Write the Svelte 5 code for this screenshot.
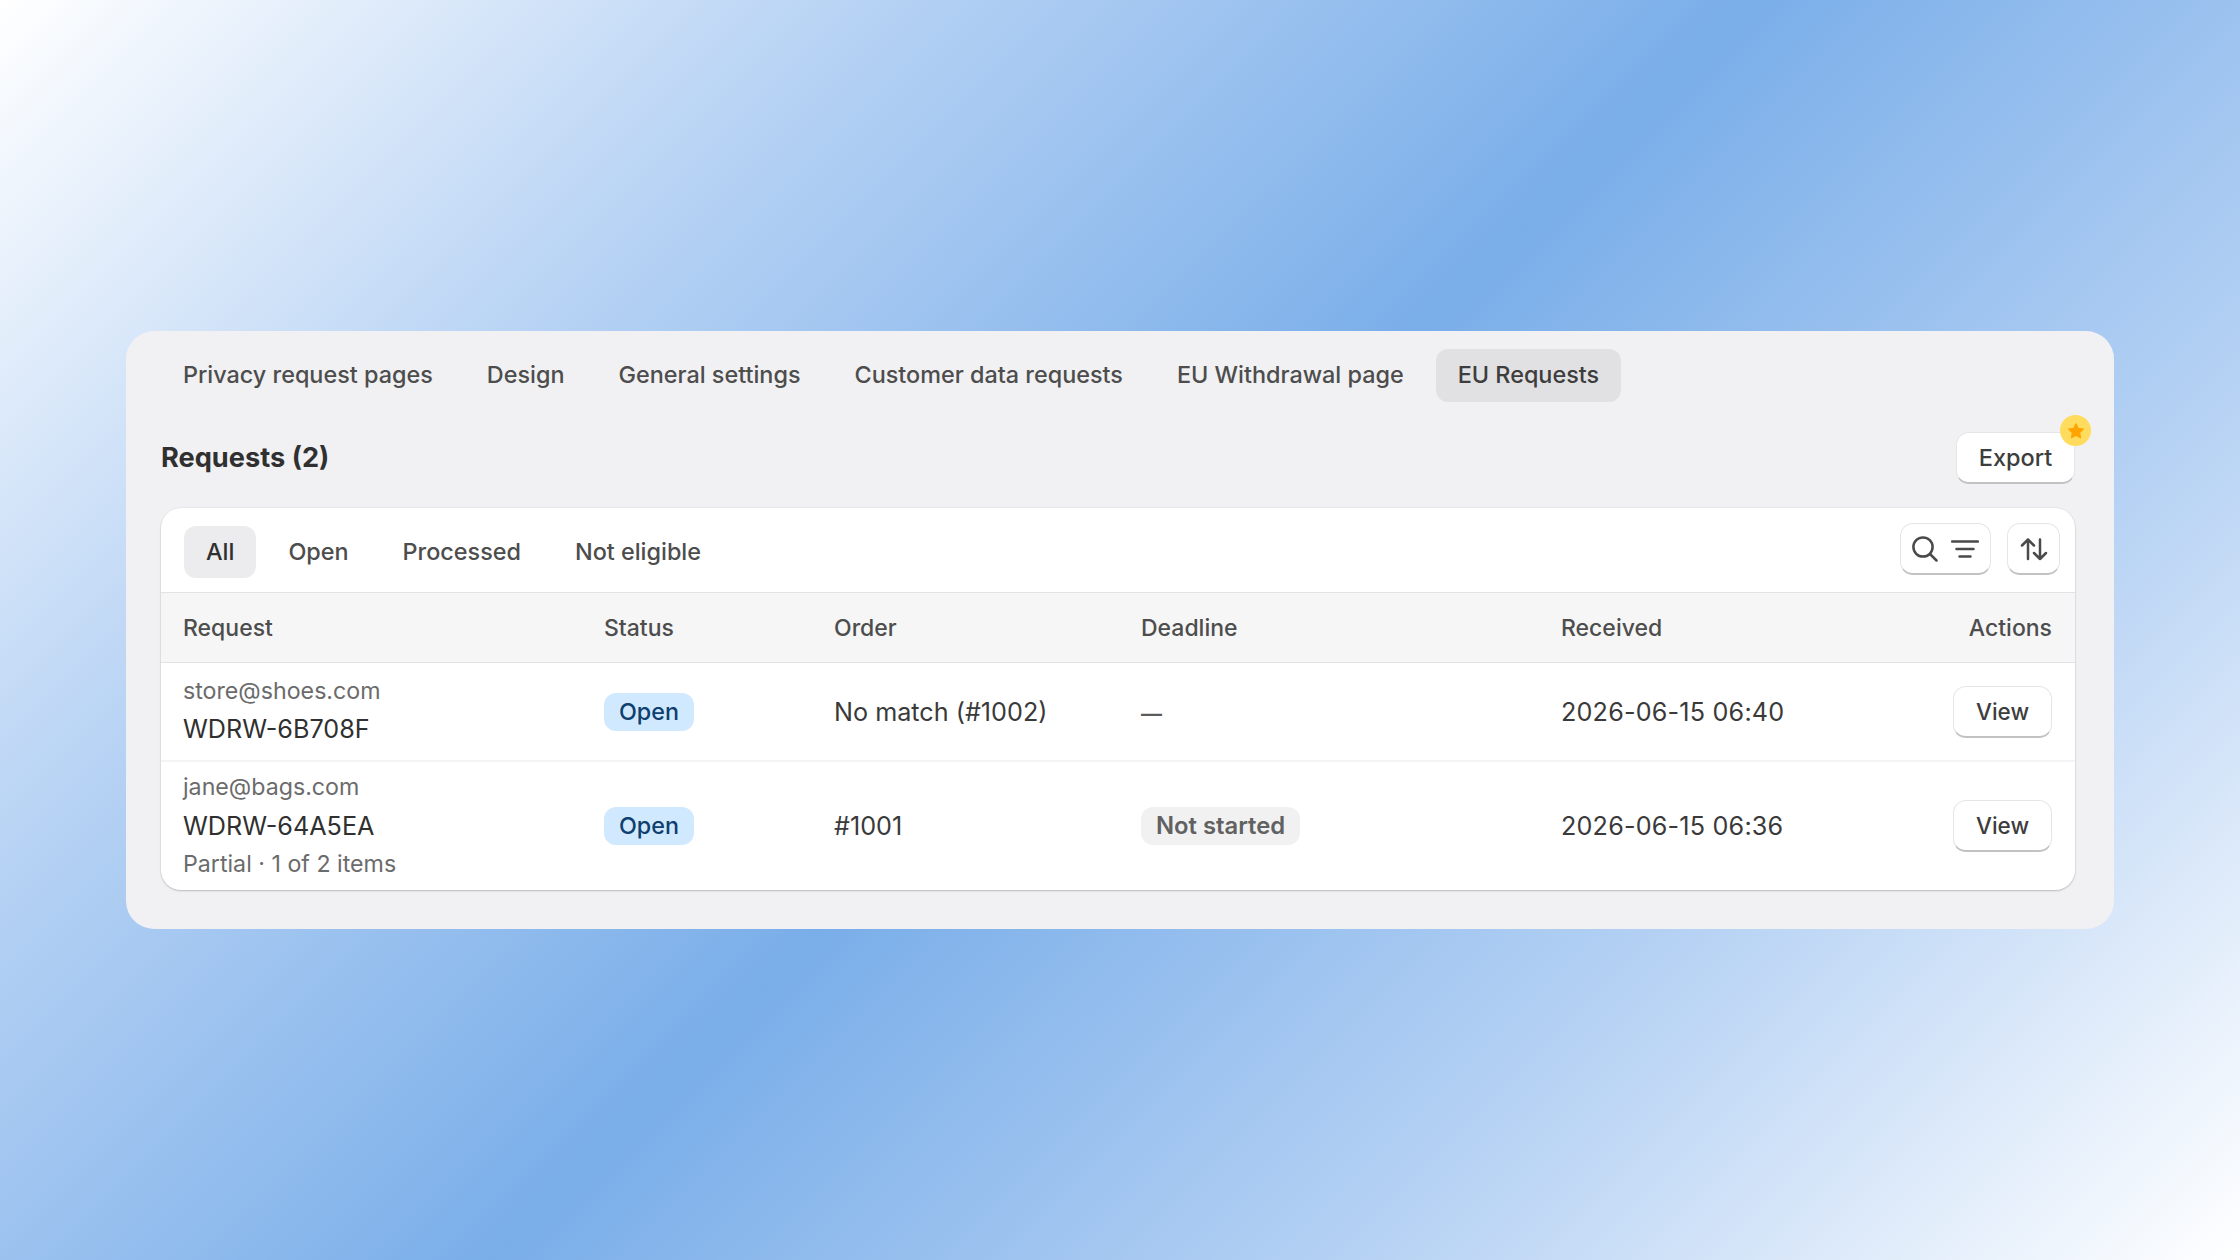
<script>
  const tabs = ['Privacy request pages', 'Design', 'General settings', 'Customer data requests', 'EU Withdrawal page', 'EU Requests'];
  const filters = ['All', 'Open', 'Processed', 'Not eligible'];
  const columns = ['Request', 'Status', 'Order', 'Deadline', 'Received', 'Actions'];
  const rows = [
    { email: 'store@shoes.com', code: 'WDRW-6B708F', order: 'No match (#1002)', deadline: '—', received: '2026-06-15 06:40' },
    { email: 'jane@bags.com', code: 'WDRW-64A5EA', note: 'Partial · 1 of 2 items', order: '#1001', deadline: 'Not started', received: '2026-06-15 06:36' }
  ];
</script>

<div class="page">
  <section class="panel">
    <nav class="tabs">
      {#each tabs as tab, i}
        <span class="tab" class:active={i === tabs.length - 1}>{tab}</span>
      {/each}
    </nav>

    <header class="title-row">
      <h1>Requests (2)</h1>
      <div class="export-wrap">
        <button class="btn export">Export</button>
        <span class="star">
          <svg viewBox="0 0 24 24" width="18" height="18"><path d="M12 2.2l3 6.3 6.9.9-5 4.8 1.2 6.9-6.1-3.3-6.1 3.3 1.2-6.9-5-4.8 6.9-.9z" fill="#ffa400" stroke="#ffa400" stroke-width="1.5" stroke-linejoin="round"/></svg>
        </span>
      </div>
    </header>

    <div class="card">
      <div class="filter-row">
        <div class="filters">
          {#each filters as f, i}
            <span class="filter" class:active={i === 0}>{f}</span>
          {/each}
        </div>
        <div class="tools">
          <button class="btn tool search" aria-label="Search and filter">
            <svg viewBox="0 0 26 28" width="26" height="28" fill="none" stroke="#4a4a4a" stroke-width="2.5" stroke-linecap="round">
              <circle cx="11" cy="12" r="9.6" />
              <path d="M18 19l6.500 6.500" />
            </svg>
            <svg viewBox="0 0 28 28" width="28" height="28" fill="none" stroke="#4a4a4a" stroke-width="2.5" stroke-linecap="round">
              <path d="M1 6.500h26M5.500 14h17M8.500 21.500h11" />
            </svg>
          </button>
          <button class="btn tool sort" aria-label="Sort">
            <svg viewBox="0 0 28 28" width="28" height="28" fill="none" stroke="#4a4a4a" stroke-width="2.5" stroke-linecap="round" stroke-linejoin="round">
              <path d="M8 24V4.500M2 10.500l6-6 6 6" />
              <path d="M20 4.500V24M14 18l6 6 6-6" />
            </svg>
          </button>
        </div>
      </div>

      <div class="grid head">
        {#each columns as col}
          <span>{col}</span>
        {/each}
      </div>

      {#each rows as row}
        <div class="grid row">
          <div class="request" class:short={!row.note}>
            <span class="sub">{row.email}</span>
            <span class="code">{row.code}</span>
            {#if row.note}<span class="sub">{row.note}</span>{/if}
          </div>
          <div><span class="badge open">Open</span></div>
          <div>{row.order}</div>
          <div>
            {#if row.deadline === '—'}
              <span class="dash">—</span>
            {:else}
              <span class="badge muted">{row.deadline}</span>
            {/if}
          </div>
          <div class="date">{row.received}</div>
          <div class="action"><button class="btn view">View</button></div>
        </div>
      {/each}
    </div>
  </section>
</div>

<style>
  :global(body) {
    margin: 0;
    font-family: Inter, "Liberation Sans", sans-serif;
  }
  .page {
    width: 2240px;
    height: 1260px;
    display: flex;
    align-items: center;
    justify-content: center;
    background: linear-gradient(135deg, #ffffff 0%, #b6d2f4 25%, #7aaee9 50%, #b6d2f4 75%, #ffffff 100%);
  }
  .panel {
    box-sizing: border-box;
    width: 1988px;
    height: 598px;
    padding: 18px 39px 39px 35px;
    background: #f1f1f3;
    border-radius: 28px;
    color: #303030;
  }
  .tabs { display: flex; gap: 10px; }
  .tab {
    padding: 0 22px;
    height: 53px;
    line-height: 51px;
    font-size: 23.4px;
    font-weight: 500;
    color: #4d4d4d;
    border-radius: 12px;
  }
  .tab.active { background: #e1e1e3; color: #3d3d3d; }

  .title-row {
    display: flex;
    justify-content: space-between;
    align-items: flex-start;
    margin-top: 30px;
    height: 51px;
  }
  h1 {
    margin: 0;
    line-height: 52px;
    font-size: 27.2px;
    font-weight: 650;
    color: #303030;
  }
  .btn {
    box-sizing: border-box;
    display: flex;
    align-items: center;
    justify-content: center;
    font-family: inherit;
    background: #fff;
    border: 1px solid #e6e6e6;
    border-bottom: 2px solid #c2c2c2;
    border-radius: 13px;
    color: #3d3d3d;
    padding: 0;
  }
  .export-wrap { position: relative; }
  .export {
    width: 119px;
    height: 52px;
    font-size: 23.5px;
    font-weight: 500;
  }
  .star {
    position: absolute;
    top: -17px;
    right: -16px;
    width: 31px;
    height: 31px;
    border-radius: 50%;
    background: #ffdc5e;
    display: flex;
    align-items: center;
    justify-content: center;
  }

  .card {
    margin-top: 25px;
    background: #fff;
    border-radius: 20px;
    box-shadow: 0 1px 2px rgba(0, 0, 0, 0.2), 0 0 0 1px rgba(0, 0, 0, 0.03);
    overflow: hidden;
    font-size: 25.2px;
  }
  .filter-row {
    box-sizing: border-box;
    height: 85px;
    padding: 15px 15px 0 23px;
    display: flex;
    justify-content: space-between;
    align-items: flex-start;
    border-bottom: 1px solid #e3e3e3;
  }
  .filters { display: flex; gap: 10px; margin-top: 3px; }
  .filter {
    padding: 0 22px;
    height: 52px;
    line-height: 52px;
    font-size: 23.4px;
    font-weight: 500;
    color: #4d4d4d;
    border-radius: 12px;
  }
  .filter.active { background: #ececee; color: #303030; }
  .tools { display: flex; gap: 16px; }
  .tool { height: 52px; }
  .search { width: 91px; gap: 13px; }
  .sort { width: 53px; }

  .grid {
    display: grid;
    grid-template-columns: 421px 230px 307px 420px 1fr 120px;
    padding: 0 23px 0 22px;
    align-items: center;
  }
  .head {
    box-sizing: border-box;
    height: 70px;
    background: #f6f6f7;
    border-bottom: 1px solid #e3e3e3;
    font-size: 23px;
    font-weight: 500;
    color: #4d4d4d;
  }
  .head span:last-child { text-align: right; }
  .row { color: #3a3a3a; height: 97px; box-sizing: border-box; }
  .row + .row { height: 130px; border-top: 2px solid #f4f4f5; }
  .request { display: flex; flex-direction: column; line-height: 38.5px; }
  .request.short { margin-bottom: 3px; }
  .sub { color: #6b6b6b; font-size: 23.2px; }
  .code { color: #303030; }
  .date { letter-spacing: 0.18px; }
  .badge {
    display: inline-block;
    height: 38px;
    line-height: 38px;
    padding: 0 15px;
    border-radius: 12px;
    font-size: 23.3px;
    font-weight: 500;
  }
  .open { background: #d1e9ff; color: #0e3f6e; }
  .muted { background: #f1f1f2; color: #616161; font-weight: 600; font-size: 23.8px; }
  .dash { color: #5c5c5c; font-size: 21px; font-weight: 600; }
  .action { display: flex; justify-content: flex-end; }
  .view {
    width: 99px;
    height: 52px;
    font-size: 22.5px;
    font-weight: 500;
  }
</style>
